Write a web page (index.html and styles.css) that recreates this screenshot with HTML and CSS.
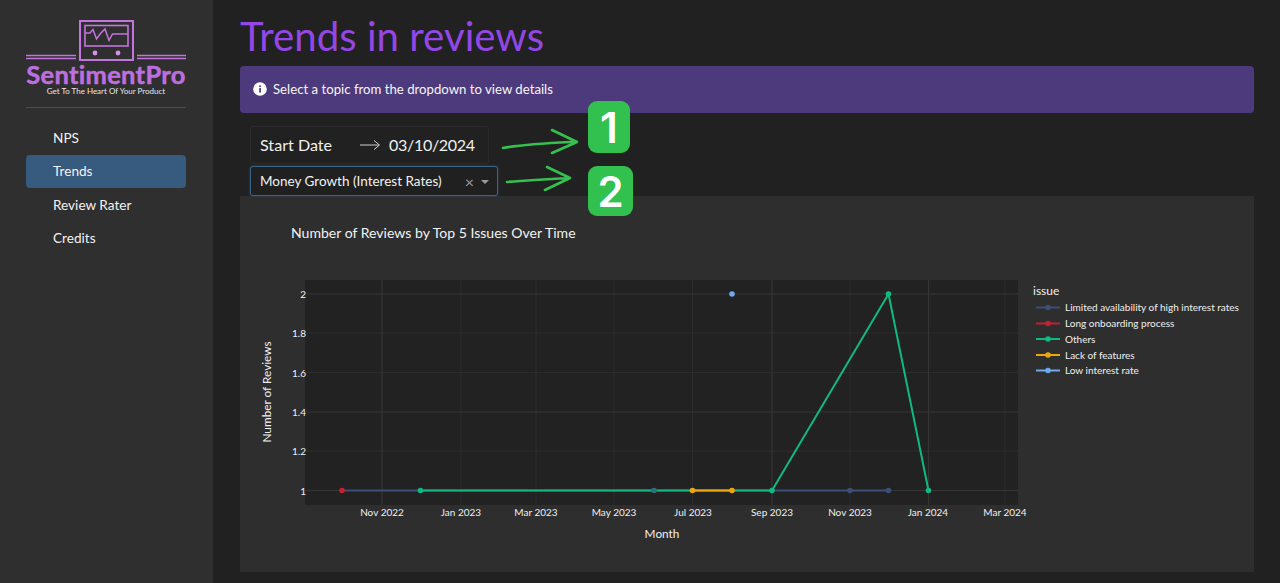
FILE: index.html
```html
<!DOCTYPE html>
<html>
  <head>
    <title>SentimentPro - Trends</title>
    <meta name="viewport" content="width=device-width, initial-scale=1" />
    <link rel="stylesheet" href="styles.css">
  </head>
  <body>
    <div class="app">
      <aside class="sidebar">
        <svg class="logo" viewBox="0 0 213 107" width="213" height="107">
          <g fill="none" stroke="#c274df" stroke-width="2">
            <rect x="80" y="21" width="53" height="39" />
            <rect x="85" y="25.500" width="43" height="20.500" stroke-width="1.6" />
            <path d="M85 33H90L93 29.500L96.500 39L100.500 33.500L105 29L109 40.500L112.500 34H128" stroke-width="1.5" />
            <path d="M26 55.500H76M26 58.500H76M137 55.500H186M137 58.500H186" stroke-width="1.7" />
          </g>
          <circle cx="95" cy="53" r="2.400" fill="#d88fea" />
          <circle cx="118" cy="53" r="2.400" fill="#d88fea" />
          <text class="logo-name" x="106" y="83.500" text-anchor="middle">SentimentPro</text>
          <text class="logo-tag" x="106" y="94" text-anchor="middle">Get To The Heart Of Your Product</text>
        </svg>
        <hr class="sidebar-rule" />
        <nav class="nav">
          <a class="nav-item">NPS</a>
          <a class="nav-item active">Trends</a>
          <a class="nav-item">Review Rater</a>
          <a class="nav-item">Credits</a>
        </nav>
      </aside>

      <main class="main">
        <h1 class="title">Trends in reviews</h1>
        <div class="alert">
          <svg width="14" height="14" viewBox="0 0 14 14">
            <circle cx="7" cy="7" r="6.800" fill="#fff" />
            <rect x="6.200" y="6" width="1.700" height="4.600" fill="#4d3a7c" />
            <rect x="6.200" y="3.400" width="1.700" height="1.700" fill="#4d3a7c" />
          </svg>
          <span>Select a topic from the dropdown to view details</span>
        </div>

        <div class="filters">
          <div class="date-box">
            <span>Start Date</span>
            <svg width="22" height="12" viewBox="0 0 22 12">
              <path d="M1 6H20M15 1.500L20.500 6L15 10.500" fill="none" stroke="#cfcfcf" stroke-width="1" />
            </svg>
            <span class="date-value">03/10/2024</span>
          </div>
          <div class="select-box">
            <span class="select-value">Money Growth (Interest Rates)</span>
            <span class="select-clear">×</span>
            <span class="select-caret"></span>
          </div>

          <svg class="arrows" width="80" height="80" viewBox="0 0 80 80">
            <g fill="none" stroke="#35c04f" stroke-width="2.600" stroke-linecap="round" stroke-linejoin="round">
              <path d="M2 20C24 16 50 15 76 13.700M51 2L76 14L51 25" />
              <path d="M6 54C28 52 48 51 69 50M46 39L69 50L44 62" />
            </g>
          </svg>
          <div class="badge badge-one">1</div>
          <div class="badge badge-two">2</div>
        </div>

        <section class="card">
          <svg class="chart" viewBox="240 196 1014 376" width="1014" height="376">
            <text class="chart-title" x="291" y="238">Number of Reviews by Top 5 Issues Over Time</text>
            <rect x="305" y="280" width="713" height="225" fill="#222222" />

            <g stroke="#2c2c2c" stroke-width="1">
              <path d="M461 280V505M536 280V505M614 280V505M692.500 280V505M850 280V505M1005 280V505" />
              <path d="M305 333H1018M305 372.500H1018M305 451H1018" />
            </g>
            <g stroke="#353535" stroke-width="1.200">
              <path d="M382 280V505M772 280V505M928.500 280V505" />
              <path d="M305 294H1018M305 412H1018M305 490.500H1018" />
            </g>

            <g class="tick" text-anchor="end">
              <text x="306" y="298">2</text>
              <text x="306" y="337">1.8</text>
              <text x="306" y="377">1.6</text>
              <text x="306" y="416">1.4</text>
              <text x="306" y="455">1.2</text>
              <text x="306" y="495">1</text>
            </g>
            <g class="tick" text-anchor="middle">
              <text x="382" y="516">Nov 2022</text>
              <text x="461" y="516">Jan 2023</text>
              <text x="536" y="516">Mar 2023</text>
              <text x="614" y="516">May 2023</text>
              <text x="693" y="516">Jul 2023</text>
              <text x="772" y="516">Sep 2023</text>
              <text x="850" y="516">Nov 2023</text>
              <text x="928" y="516">Jan 2024</text>
              <text x="1005" y="516">Mar 2024</text>
            </g>
            <text class="axis-label" x="662" y="538" text-anchor="middle">Month</text>
            <text class="axis-label" transform="translate(271 392) rotate(-90)" text-anchor="middle">Number of Reviews</text>

            <!-- series -->
            <g fill="none" stroke-width="2">
              <path d="M342 490.500H888" stroke="#3d4f78" />
              <path d="M420 490.500H772L888.500 294L928.500 490.500" stroke="#10b981" />
              <path d="M692.500 490.500H732" stroke="#eda60f" />
            </g>
            <circle cx="342" cy="490.500" r="2.800" fill="#c32033" />
            <circle cx="420.500" cy="490.500" r="2.800" fill="#10b981" />
            <circle cx="654" cy="490.500" r="2.800" fill="#2f6f78" />
            <circle cx="692.500" cy="490.500" r="2.800" fill="#eda60f" />
            <circle cx="732" cy="490.500" r="2.800" fill="#eda60f" />
            <circle cx="772" cy="490.500" r="2.800" fill="#10b981" />
            <circle cx="850" cy="490.500" r="2.800" fill="#3d4f78" />
            <circle cx="888.500" cy="490.500" r="2.800" fill="#3d4f78" />
            <circle cx="888.500" cy="294" r="2.800" fill="#10b981" />
            <circle cx="928.500" cy="490.500" r="2.800" fill="#10b981" />
            <circle cx="732" cy="294" r="2.800" fill="#6ea8ef" />

            <!-- legend -->
            <text class="legend-title" x="1033" y="295">issue</text>
            <g class="legend" stroke-width="2">
              <path d="M1036 307.500H1060" stroke="#3d4f78" />
              <circle cx="1048" cy="307.500" r="2.800" fill="#3d4f78" />
              <text x="1065" y="311">Limited availability of high interest rates</text>
              <path d="M1036 323.500H1060" stroke="#c32033" />
              <circle cx="1048" cy="323.500" r="2.800" fill="#c32033" />
              <text x="1065" y="327">Long onboarding process</text>
              <path d="M1036 339H1060" stroke="#10b981" />
              <circle cx="1048" cy="339" r="2.800" fill="#10b981" />
              <text x="1065" y="342.500">Others</text>
              <path d="M1036 355H1060" stroke="#eda60f" />
              <circle cx="1048" cy="355" r="2.800" fill="#eda60f" />
              <text x="1065" y="358.500">Lack of features</text>
              <path d="M1036 370.500H1060" stroke="#6ea8ef" />
              <circle cx="1048" cy="370.500" r="2.800" fill="#6ea8ef" />
              <text x="1065" y="374">Low interest rate</text>
            </g>
          </svg>
        </section>
      </main>
    </div>
  </body>
</html>
```

FILE: styles.css
```css
html,
body {
  margin: 0;
  padding: 0;
  height: 100%;
}

body {
  font-family: Lato, "Open Sans", sans-serif;
  background: #212121;
  color: #fff;
  overflow: hidden;
}

.app {
  display: flex;
  height: 583px;
}

.sidebar {
  width: 213px;
  flex-shrink: 0;
  background: #2f2f2f;
}

.logo {
  display: block;
}

.logo-name {
  font-size: 25.5px;
  font-weight: 700;
  letter-spacing: 0.3px;
  fill: #bd6fdf;
  stroke: #bd6fdf;
  stroke-width: 0.5px;
}

.logo-tag {
  font-size: 8px;
  fill: #e8e8e8;
}

.sidebar-rule {
  height: 1px;
  margin: 0 27px 0 26px;
  border: none;
  background: #4c4c4c;
}

.nav {
  display: flex;
  flex-direction: column;
  padding: 13px 27px 0 26px;
  gap: 0.5px;
}

.nav-item {
  display: flex;
  align-items: center;
  height: 33px;
  padding-left: 27px;
  font-size: 13.6px;
  color: #f2f2f2;
  border-radius: 4px;
}

.nav-item.active {
  background: #375a7f;
}

.main {
  flex: 1;
  min-width: 0;
  padding: 0 26px 11px 27px;
  display: flex;
  flex-direction: column;
}

.title {
  margin: 0;
  height: 66px;
  line-height: 72px;
  font-size: 40.2px;
  font-weight: 400;
  color: #9347e6;
}

.alert {
  display: flex;
  align-items: center;
  gap: 6px;
  height: 47px;
  padding: 0 0 1px 13px;
  box-sizing: border-box;
  font-size: 13.2px;
  background: #4d3a7c;
  border-radius: 4px;
  color: #f5f5f5;
}

.filters {
  position: relative;
  padding: 13px 0 0 10px;
}

.date-box {
  display: flex;
  align-items: center;
  width: 239px;
  height: 38px;
  box-sizing: border-box;
  padding: 0 0 1px 9px;
  font-size: 16.1px;
  color: #efefef;
  border: 1px solid #2b2b2b;
  border-radius: 2px;
}

.date-box svg {
  margin: 1px 8px 0 27px;
}

.date-value {
  letter-spacing: -0.35px;
}

.select-box {
  display: flex;
  align-items: center;
  width: 248px;
  height: 30px;
  box-sizing: border-box;
  margin-top: 2px;
  padding: 0 8px 0 9px;
  font-size: 13.5px;
  color: #f2f2f2;
  background: #202020;
  border: 1px solid #3b6287;
  border-radius: 3px;
  box-shadow: 0 0 2px #375a7f;
}

.select-value {
  flex: 1;
}

.select-clear {
  margin-right: 7px;
  font-size: 16px;
  color: #9a9a9a;
}

.select-caret {
  width: 0;
  height: 0;
  margin-top: 2px;
  border-left: 4px solid transparent;
  border-right: 4px solid transparent;
  border-top: 4px solid #9a9a9a;
}

/* hand drawn annotations on top of the screenshot */
.arrows {
  position: absolute;
  left: 261px;
  top: 15px;
}

.badge {
  position: absolute;
  display: flex;
  align-items: center;
  justify-content: center;
  font-weight: 600;
  font-family: Inter, Lato, sans-serif;
  color: #fff;
  background: #32c04e;
  border-radius: 9px;
}

.badge-one {
  left: 348px;
  top: -12px;
  width: 42px;
  height: 52px;
  font-size: 42px;
}

.badge-two {
  left: 348px;
  top: 53px;
  width: 45px;
  height: 50px;
  font-size: 42px;
}

.card {
  height: 376px;
  background: #2e2e2e;
}

.chart {
  display: block;
}

.chart-title {
  font-size: 14.05px;
  fill: #f2f2f2;
}

.tick {
  font-size: 10px;
  fill: #f0f0f0;
}

.axis-label {
  font-size: 11.8px;
  fill: #f0f0f0;
}

.legend-title {
  font-size: 12px;
  fill: #f0f0f0;
}

.legend text {
  font-size: 10px;
  fill: #f0f0f0;
}
```
